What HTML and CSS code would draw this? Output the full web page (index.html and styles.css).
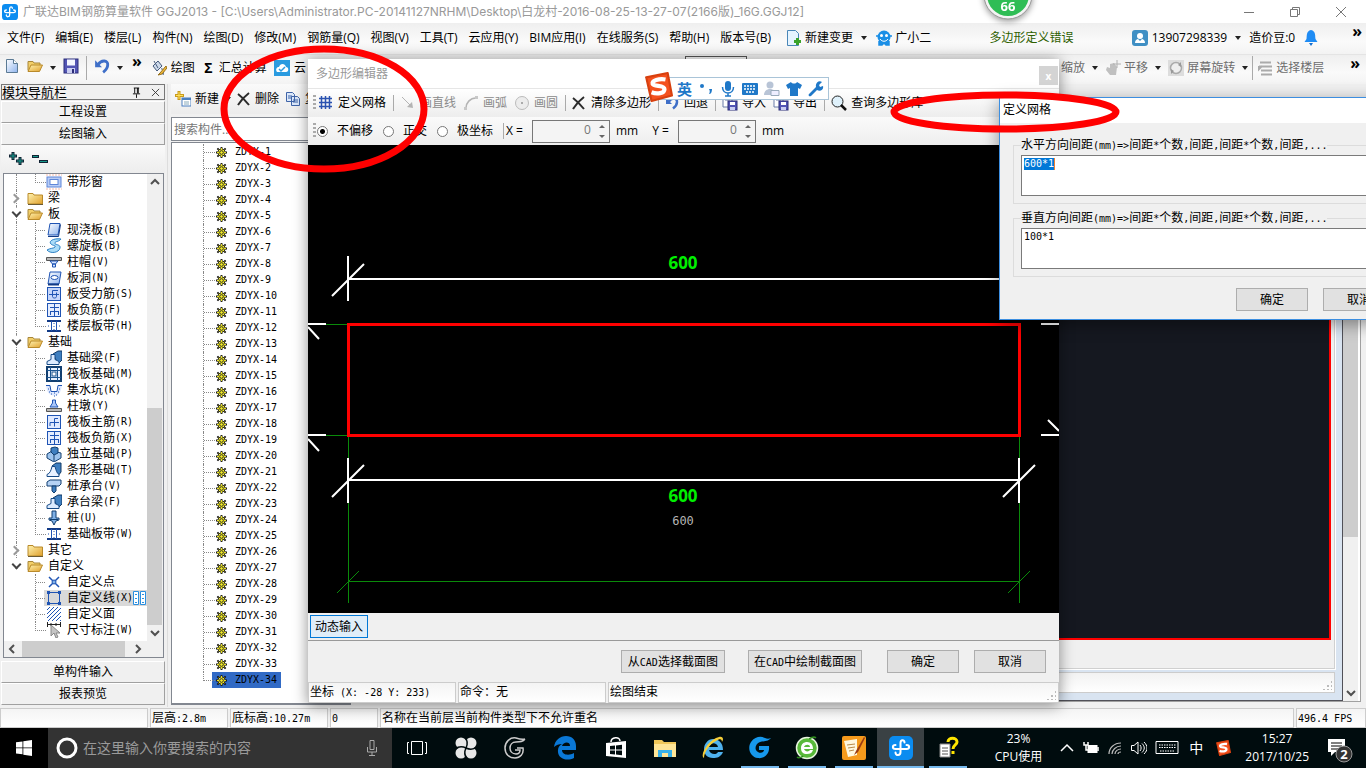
FILE: index.html
```html
<!DOCTYPE html>
<html lang="zh-CN">
<head>
<meta charset="utf-8">
<title>广联达BIM钢筋算量软件 GGJ2013</title>
<link rel="stylesheet" href="styles.css">
</head>
<body>
<svg class="defs" aria-hidden="true">
  <defs>
    <linearGradient id="gold" x1="0" y1="0" x2="1" y2="1"><stop offset="0" stop-color="#fff3b0"/><stop offset="1" stop-color="#e0a02c"/></linearGradient>
    <linearGradient id="sky" x1="0" y1="0" x2="1" y2="1"><stop offset="0" stop-color="#fff"/><stop offset="1" stop-color="#8fb4ee"/></linearGradient>
  </defs>
  <symbol id="app" viewBox="0 0 24 24"><rect width="24" height="24" rx="5" fill="#0b8cf0"/><path d="M15.500 6.500c0-3-4-3-4 .5v9c0 4-5 4-5 .5M6.500 9C3 9 3 13 6.500 13h11c3.500 0 3.500-4 0-4" fill="none" stroke="#fff" stroke-width="2" stroke-linecap="round"/></symbol>
  <symbol id="folder" viewBox="0 0 16 16"><path d="M1 3.500h5l1 1.500h8.500v9H1z" fill="url(#gold)" stroke="#b98a2a"/><path d="M1 14.500h15" stroke="#6b5a33"/></symbol>
  <symbol id="folder-o" viewBox="0 0 16 16"><path d="M1 12.500V3.500h5l1 1.500h6v2" fill="#f2cf6a" stroke="#a8873a"/><path d="M4 7h11.500l-3 6.500H1z" fill="url(#gold)" stroke="#b98a2a"/></symbol>
  <symbol id="i-win" viewBox="0 0 16 16"><path d="M0 1h16M0 15h16" stroke="#f6b8a8" stroke-dasharray="2 1"/><rect x="1" y="3" width="14" height="10" fill="#b9cdf6" stroke="#5f86d8"/><rect x="4" y="5.500" width="8" height="5" fill="#fff" stroke="#5f86d8"/></symbol>
  <symbol id="i-slab" viewBox="0 0 16 16"><path d="M4 1.500h10L12 13H2z" fill="url(#sky)" stroke="#1f54b4"/><path d="M2 14.500h10.500l2-12" fill="none" stroke="#123a86"/></symbol>
  <symbol id="i-spiral" viewBox="0 0 16 16"><path d="M15 1C8 0 2 3 5 6c2 2 5 1 4 3-1 1.500-5 1-8 3 3 4 12 3 13-2 1-4-6-3-5-5 0-2 4-1 6-4z" fill="#a9dcf8" stroke="#2b7fc4"/></symbol>
  <symbol id="i-cap" viewBox="0 0 16 16"><path d="M.5 3.500h15v3H.500z" fill="#b8b8b8" stroke="#555"/><path d="M4 7h8l-2.500 3h-3zM6.500 10h3v3h-3z" fill="#d6e4ff" stroke="#1f54b4"/></symbol>
  <symbol id="i-hole" viewBox="0 0 16 16"><path d="M4 2h11l-2 12H2z" fill="url(#sky)" stroke="#1f54b4"/><ellipse cx="8.500" cy="7.500" rx="3.500" ry="2" fill="#fff" stroke="#1f54b4"/><path d="M2 14.500h11" stroke="#123a86" stroke-width="2"/></symbol>
  <symbol id="i-rebar" viewBox="0 0 16 16"><rect x="1.500" y="1.500" width="13" height="13" fill="#dfe9ff" stroke="#1f54b4"/><path d="M12 4.500H8.500v8M4 12V8.500h9" fill="none" stroke="#1f54b4"/></symbol>
  <symbol id="i-force" viewBox="0 0 16 16"><rect x="1.500" y="1.500" width="13" height="13" fill="#c5d6fb" stroke="#1f54b4"/><path d="M12 4.500H6.500v6c0 2 4 2 4 0v-4M3 8.500h10" fill="none" stroke="#1f54b4"/></symbol>
  <symbol id="i-neg" viewBox="0 0 16 16"><rect x="1.500" y="1.500" width="13" height="13" fill="#e6eeff" stroke="#1f54b4"/><path d="M8.500 2v12M4 5.500h9M4 9.500h9M4.500 9v4M12.500 9v4" fill="none" stroke="#1f54b4"/></symbol>
  <symbol id="i-band" viewBox="0 0 16 16"><path d="M1 3h14M1 13h14" stroke="#123a86" stroke-width="2"/><path d="M5.500 3v10M10.500 3v10" stroke="#1f54b4"/><path d="M2 8h1M8 5v1M8 8v1M8 11v1M13 8h1" stroke="#1f54b4"/></symbol>
  <symbol id="i-beam" viewBox="0 0 16 16"><path d="M7 4l5-3h4v9l-4 4z" fill="#3f7fc0" stroke="#123a66"/><path d="M1 14.500v-3l4-2V4.500h4v5l4 2v3z" fill="#dcebff" stroke="#164a86"/></symbol>
  <symbol id="i-raft" viewBox="0 0 16 16"><rect x="1" y="1" width="14" height="14" fill="#e8f1ff" stroke="#123f70" stroke-width="2"/><path d="M4.500 1v14M11.500 1v14M1 4.500h14M1 11.500h14" stroke="#1c5690"/><rect x="6" y="6" width="4" height="4" fill="#fff" stroke="#1c5690"/></symbol>
  <symbol id="i-pit" viewBox="0 0 16 16"><path d="M0 3.500h4l1 6h6l1-6h4c-1 5-2 10-8 10S1 9 0 3.500z" fill="#dfe9ff"/><path d="M0 3.500h4l1 6h6l1-6h4" fill="none" stroke="#1f54b4"/><path d="M2 7h1M3 10h1M5 12h1M8 11h1M10 13h1M12 10h1M13 7h1M8 14h1" stroke="#1f54b4"/></symbol>
  <symbol id="i-pier" viewBox="0 0 16 16"><path d="M6.500 2h3v3l2.500 4H4l2.500-4z" fill="#a9c6fa" stroke="#1f54b4"/><path d="M.5 10.500h15v3H.500z" fill="#bbb" stroke="#555"/></symbol>
  <symbol id="i-foot" viewBox="0 0 16 16"><path d="M1 8l5-3 9 2v5l-7 4-7-4z" fill="#9fc5ee" stroke="#123f70"/><path d="M5 6V2l4-1 3 1v5l-4 2z" fill="#3f7fc0" stroke="#123f70"/><path d="M8 9v6" stroke="#123f70"/></symbol>
  <symbol id="i-strip" viewBox="0 0 16 16"><path d="M6 4l4-3h5v9l-3 4z" fill="#3f7fc0" stroke="#123a66"/><path d="M1 14.500v-2c3-1 4-4 5-8h3c1 4 2 7 4 8v2z" fill="#e8f1ff" stroke="#164a86"/></symbol>
  <symbol id="i-pcap" viewBox="0 0 16 16"><path d="M1 4l3-2h11v4l-2 2H1z" fill="#b5d2f4" stroke="#123f70"/><path d="M6 8h4v5l-2 2-2-2z" fill="#3f7fc0" stroke="#123f70"/></symbol>
  <symbol id="i-pile" viewBox="0 0 16 16"><path d="M6 1h4v7h3v2l-3 1-2 4-2-4-3-1V8h3z" fill="#7fb0e6" stroke="#123f70"/><path d="M4 9.500h8" stroke="#123f70"/></symbol>
  <symbol id="i-pt" viewBox="0 0 16 16"><path d="M3 3l10 10M13 3L3 13" stroke="#1f54b4" stroke-width="1.500"/><circle cx="8" cy="8" r="2" fill="#7fb0e6" stroke="#1f54b4"/></symbol>
  <symbol id="i-line" viewBox="0 0 16 16"><path d="M2.500 2.500h11v11h-11z" fill="none" stroke="#1f54b4"/><path d="M1 1h3v3H1zM12 1h3v3h-3zM1 12h3v3H1zM12 12h3v3h-3z" fill="#1f54b4"/></symbol>
  <symbol id="i-face" viewBox="0 0 16 16"><path d="M1 4l3-3M1 8l7-7M1 12l11-11M2 15L15 2M6 15l9-9M10 15l5-5M14 15l1-1" stroke="#1f54b4"/></symbol>
  <symbol id="i-dim" viewBox="0 0 16 16"><path d="M1 2.500h14M1.500 0v5M14.500 0v5M5 1v3M10 1v3" stroke="#222"/><path d="M5 3v11l3-3 2 5 2-1-2-4h4z" fill="#c4c4c4" stroke="#888"/></symbol>
  <symbol id="gear" viewBox="0 0 12 12"><path d="M6 0v12M0 6h12M1.500 1.500l9 9M10.500 1.500l-9 9" stroke="#111" stroke-width="2"/><circle cx="6" cy="6" r="4" fill="#f4ec28" stroke="#222"/><path d="M6 1v10M1 6h10M3 3l6 6M9 3L3 9" stroke="#f4ec28"/><circle cx="6" cy="6" r="2" fill="#f4ec28" stroke="#222"/></symbol>
  <symbol id="x" viewBox="0 0 14 14"><path d="M1 2c4 3 7 6 11 11M12 1C8 4 4 8 1 13" fill="none" stroke="#2b2b2b" stroke-width="2"/></symbol>
  <symbol id="undo" viewBox="0 0 14 14"><path d="M1 2v6h6z" fill="#3f6fc8"/><path d="M3.500 6c3-5 9-4 8.500 0 0 3-2 5-4 6.500" fill="none" stroke="#3f6fc8" stroke-width="2.500"/></symbol>
  <symbol id="disk" viewBox="0 0 16 16"><rect x="1" y="1" width="14" height="14" fill="#5254b4" stroke="#2b2c78"/><rect x="4" y="1.500" width="8" height="6" fill="#f4f6ff"/><rect x="4" y="10" width="8" height="5" fill="#c9cdf2"/><rect x="9" y="11" width="2" height="4" fill="#2b2c78"/></symbol>
  <symbol id="io" viewBox="0 0 16 16"><path d="M1 3h9v9H1zM3 5h5" fill="#fff" stroke="#6b7ca8"/><rect x="6" y="6" width="9" height="9" fill="#5254b4" stroke="#2b2c78"/><rect x="8" y="7" width="5" height="3" fill="#fff"/><rect x="8" y="12" width="5" height="3" fill="#c9cdf2"/></symbol>
  <symbol id="doc" viewBox="0 0 16 16"><path d="M2.500 1.500h7l4 4v9h-11z" fill="url(#sky)" stroke="#5b7a94"/><path d="M9.500 1.500v4h4" fill="#fff" stroke="#5b7a94"/></symbol>
  <symbol id="sogou" viewBox="0 0 28 28"><path d="M3 5l20-4 4 21-19 5z" fill="#f4511e" stroke="#d8400f" stroke-linejoin="round" stroke-width="2"/><path d="M21 7c-6-1-13 1-12 4s11 1 11 5-7 5-12 3" fill="none" stroke="#fff" stroke-width="4"/></symbol>
</svg>

<div class="desktop">
<header class="titlebar">
  <svg class="i16"><use href="#app"/></svg>
  <h1>广联达BIM钢筋算量软件 GGJ2013 - [C:\Users\Administrator.PC-20141127NRHM\Desktop\白龙村-2016-08-25-13-27-07(2166版)_16G.GGJ12]</h1>
  <div class="winctl">
    <button aria-label="最小化"><svg viewBox="0 0 12 12"><path d="M1 6.500h10"/></svg></button>
    <button aria-label="还原"><svg viewBox="0 0 12 12"><path d="M1.500 3.500h7v7h-7zM3.500 3.500v-2h7v7h-2"/></svg></button>
    <button aria-label="关闭"><svg viewBox="0 0 12 12"><path d="M1 1l10 10M11 1L1 11"/></svg></button>
  </div>
</header>

<nav class="menubar">
  <button>文件(F)</button><button>编辑(E)</button><button>楼层(L)</button><button>构件(N)</button><button>绘图(D)</button><button>修改(M)</button><button>钢筋量(Q)</button><button>视图(V)</button><button>工具(T)</button><button>云应用(Y)</button><button>BIM应用(I)</button><button>在线服务(S)</button><button>帮助(H)</button><button>版本号(B)</button>
  <button class="ic"><svg class="i16" viewBox="0 0 16 16"><path d="M1.500.500h8l3 3v12h-11z" fill="#e6f4ff" stroke="#4a87b8"/><path d="M9.500 8v7M6 11.500h7" transform="translate(2)" stroke="#3aa32b" stroke-width="3"/></svg>新建变更</button><span class="caret"></span>
  <button class="ic"><svg class="i16" viewBox="0 0 16 16"><circle cx="8" cy="7" r="6.500" fill="#1b8fe6"/><path d="M3 11v4h3l2-2 2 2h3v-4M0 6h2M14 6h2" fill="#1b8fe6" stroke="#1b8fe6" stroke-width="1.500"/><circle cx="5.500" cy="5.500" r="1.500" fill="#fff"/><circle cx="10.500" cy="5.500" r="1.500" fill="#fff"/><path d="M4 9c2 3 6 3 8 0" fill="none" stroke="#fff"/></svg>广小二</button>
  <p class="notice">多边形定义错误</p>
  <div class="account">
    <button class="ic"><svg class="i16" viewBox="0 0 16 16"><rect width="16" height="16" rx="3" fill="#3f8fc4"/><circle cx="8" cy="6" r="3" fill="#fff"/><path d="M3 13c0-3 2-4 3-4l2 2 2-2c1 0 3 1 3 4z" fill="#fff"/></svg>13907298339</button>
    <span class="caret"></span><span>造价豆:0</span>
    <svg class="i16" viewBox="0 0 16 16"><path d="M8 0c5 1 4 6 4.500 9l2 3h-13l2-3C4 6 3 1 8 0z" fill="#1f8cf4"/><path d="M6 13h4l-2 3z" fill="#156fd0"/></svg>
  </div>
  <span class="more">»</span>
</nav>

<div class="toolbar">
  <button aria-label="新建"><svg class="i16"><use href="#doc"/></svg></button>
  <button aria-label="打开"><svg class="i16"><use href="#folder-o"/></svg></button><span class="caret"></span>
  <button aria-label="保存"><svg class="i16"><use href="#disk"/></svg></button><i class="sep"></i>
  <button aria-label="撤销"><svg class="i16"><use href="#undo"/></svg></button><span class="caret"></span><span class="more">»</span>
  <button class="ic"><svg class="i16" viewBox="0 0 16 16"><path d="M2 6l5-5 4 5-5 5z" fill="#cdd9ea" stroke="#44597a"/><path d="M3 1l4 7M10 9c3-1 3 3 2 6" stroke="#44597a" fill="none"/><path d="M15 6l-6 7-2 2 4-1 5-6z" fill="#f0b93a" stroke="#97701c"/></svg>绘图</button>
  <button class="ic"><b>Σ</b>汇总计算</button>
  <button class="ic"><svg class="i16" viewBox="0 0 16 16"><rect width="16" height="16" fill="#2a9be0"/><path d="M3 12c-2-3 0-5 2-5 1-4 6-4 7 0 3 0 3 5 0 5z" fill="#fff"/><path d="M5 9l2 2 4-4" stroke="#2a9be0" fill="none" stroke-width="1.500"/></svg>云</button>
  <select aria-label="楼层"></select>
  <div class="toolbar-right">
    <span>缩放</span><span class="caret"></span>
    <button class="ic"><svg class="i16" viewBox="0 0 16 16"><path d="M2 7l3 1V4l4-1 3 4-1 8H5L1 10z" fill="#c0c0c0"/><path d="M12 0v8M8 4h8" stroke="#b0b0b0"/></svg>平移</button><span class="caret"></span>
    <button class="ic"><svg class="i16" viewBox="0 0 16 16"><rect width="16" height="16" fill="#ddd"/><circle cx="8" cy="8" r="5.500" fill="#eee" stroke="#aaa" stroke-width="1.500"/><path d="M10 5l3-3v5zM6 11l-3 3V9z" fill="#999"/></svg>屏幕旋转</button><span class="caret"></span><i class="sep"></i>
    <button class="ic"><svg class="i16" viewBox="0 0 16 16"><path d="M3 2.500h11M2 6.500h13M4 10.500h11M4 14.500h11M2 6v3l3-3" stroke="#aaa" stroke-width="2" fill="none"/></svg>选择楼层</button>
  </div>
  <span class="more">»</span>
</div>

<main class="main">
  <aside class="nav-panel">
    <h2 class="nav-head"><span>模块导航栏</span><svg class="pin" viewBox="0 0 10 12"><path d="M2 1h6M3 1v6M7 1v6M6 1v6M1 7.500h8M5 8v4" stroke="#000" fill="none"/></svg><svg class="pin" viewBox="0 0 10 12"><path d="M1 2l8 8M9 2l-8 8" stroke="#333"/></svg></h2>
    <button class="bar">工程设置</button>
    <button class="bar">绘图输入</button>
    <div class="nav-tools">
      <svg viewBox="0 0 42 16"><path d="M6 1v8M2 5h8M13 6v8M9 10h8" stroke="#123" stroke-width="3"/><path d="M6 2v6M3 5h6M13 7v6M10 10h6" stroke="#169a8c"/><path d="M25 5.500h7M32 10.500h9" stroke="#123" stroke-width="3"/><path d="M26 5.500h5M33 10.500h7" stroke="#169a8c"/></svg>
    </div>
    <div class="tree-box">
      <div class="tree-row">
        <ul class="tree">
          <li class="leaf end"><svg><use href="#i-win"/></svg>带形窗</li>
          <li class="node shut"><i></i><svg><use href="#folder"/></svg>梁</li>
          <li class="node"><i></i><svg><use href="#folder-o"/></svg>板</li>
          <li class="leaf"><svg><use href="#i-slab"/></svg>现浇板<span class="m">(B)</span></li>
          <li class="leaf"><svg><use href="#i-spiral"/></svg>螺旋板<span class="m">(B)</span></li>
          <li class="leaf"><svg><use href="#i-cap"/></svg>柱帽<span class="m">(V)</span></li>
          <li class="leaf"><svg><use href="#i-hole"/></svg>板洞<span class="m">(N)</span></li>
          <li class="leaf"><svg><use href="#i-force"/></svg>板受力筋<span class="m">(S)</span></li>
          <li class="leaf"><svg><use href="#i-neg"/></svg>板负筋<span class="m">(F)</span></li>
          <li class="leaf end"><svg><use href="#i-band"/></svg>楼层板带<span class="m">(H)</span></li>
          <li class="node"><i></i><svg><use href="#folder-o"/></svg>基础</li>
          <li class="leaf"><svg><use href="#i-beam"/></svg>基础梁<span class="m">(F)</span></li>
          <li class="leaf"><svg><use href="#i-raft"/></svg>筏板基础<span class="m">(M)</span></li>
          <li class="leaf"><svg><use href="#i-pit"/></svg>集水坑<span class="m">(K)</span></li>
          <li class="leaf"><svg><use href="#i-pier"/></svg>柱墩<span class="m">(Y)</span></li>
          <li class="leaf"><svg><use href="#i-rebar"/></svg>筏板主筋<span class="m">(R)</span></li>
          <li class="leaf"><svg><use href="#i-neg"/></svg>筏板负筋<span class="m">(X)</span></li>
          <li class="leaf"><svg><use href="#i-foot"/></svg>独立基础<span class="m">(P)</span></li>
          <li class="leaf"><svg><use href="#i-strip"/></svg>条形基础<span class="m">(T)</span></li>
          <li class="leaf"><svg><use href="#i-pcap"/></svg>桩承台<span class="m">(V)</span></li>
          <li class="leaf"><svg><use href="#i-beam"/></svg>承台梁<span class="m">(F)</span></li>
          <li class="leaf"><svg><use href="#i-pile"/></svg>桩<span class="m">(U)</span></li>
          <li class="leaf end"><svg><use href="#i-band"/></svg>基础板带<span class="m">(W)</span></li>
          <li class="node shut"><i></i><svg><use href="#folder"/></svg>其它</li>
          <li class="node last"><i></i><svg><use href="#folder-o"/></svg>自定义</li>
          <li class="leaf tail"><svg><use href="#i-pt"/></svg>自定义点</li>
          <li class="leaf tail current"><svg><use href="#i-line"/></svg>自定义线<span class="m">(X)</span><svg class="cols" viewBox="0 0 13 16"><path d="M.5 1.500h5v13h-5zM7.500 1.500h5v13h-5z" fill="#fff" stroke="#2a8fe0"/><path d="M2 4.500h2M2 8.500h2M2 12.500h2M9 4.500h2M9 8.500h2M9 12.500h2" stroke="#2a8fe0"/></svg></li>
          <li class="leaf tail"><svg><use href="#i-face"/></svg>自定义面</li>
          <li class="leaf tail end"><svg><use href="#i-dim"/></svg>尺寸标注<span class="m">(W)</span></li>
        </ul>
        <div class="vscroll"><svg viewBox="0 0 16 16"><path d="M4 10l4-4 4 4"/></svg><div class="track"><i class="thumb nav-thumb"></i></div><svg viewBox="0 0 16 16"><path d="M4 6l4 4 4-4"/></svg></div>
      </div>
      <div class="hscroll"><svg viewBox="0 0 16 16"><path d="M10 4L6 8l4 4"/></svg><i class="thumb"></i><svg viewBox="0 0 16 16"><path d="M6 4l4 4-4 4"/></svg></div>
    </div>
    <button class="bar">单构件输入</button>
    <button class="bar">报表预览</button>
  </aside>

  <section class="parts">
    <div class="parts-tools">
      <button class="ic"><svg class="i16" viewBox="0 0 16 16"><path d="M4 0v9M0 4.500h9" stroke="#c99a1c" stroke-width="3"/><path d="M4 1v7M1 4.500h7" stroke="#ffe25a"/><rect x="7" y="7" width="9" height="8" fill="#fff" stroke="#4a7fc0"/><path d="M7 8h9" stroke="#4a7fc0" stroke-width="2"/><path d="M9 11h5M9 13h5" stroke="#8ab"/></svg>新建</button><span class="caret"></span>
      <button class="ic"><svg class="i14"><use href="#x"/></svg>删除</button>
      <button class="ic"><svg class="i16" viewBox="0 0 16 16"><path d="M1.500 1.500h6l2 2v7h-8zM6.500 5.500h6l2 2v7h-8z" fill="#dbe8fb" stroke="#3f64a8"/><path d="M3 5h4M3 7h3M8 9h5M8 11h5" stroke="#3f64a8"/></svg>复制</button>
    </div>
    <input class="search" type="text" placeholder="搜索构件..." aria-label="搜索构件">
    <ul class="list">
      <li><svg><use href="#gear"/></svg>ZDYX-1</li><li><svg><use href="#gear"/></svg>ZDYX-2</li><li><svg><use href="#gear"/></svg>ZDYX-3</li><li><svg><use href="#gear"/></svg>ZDYX-4</li><li><svg><use href="#gear"/></svg>ZDYX-5</li><li><svg><use href="#gear"/></svg>ZDYX-6</li><li><svg><use href="#gear"/></svg>ZDYX-7</li><li><svg><use href="#gear"/></svg>ZDYX-8</li><li><svg><use href="#gear"/></svg>ZDYX-9</li><li><svg><use href="#gear"/></svg>ZDYX-10</li><li><svg><use href="#gear"/></svg>ZDYX-11</li><li><svg><use href="#gear"/></svg>ZDYX-12</li><li><svg><use href="#gear"/></svg>ZDYX-13</li><li><svg><use href="#gear"/></svg>ZDYX-14</li><li><svg><use href="#gear"/></svg>ZDYX-15</li><li><svg><use href="#gear"/></svg>ZDYX-16</li><li><svg><use href="#gear"/></svg>ZDYX-17</li><li><svg><use href="#gear"/></svg>ZDYX-18</li><li><svg><use href="#gear"/></svg>ZDYX-19</li><li><svg><use href="#gear"/></svg>ZDYX-20</li><li><svg><use href="#gear"/></svg>ZDYX-21</li><li><svg><use href="#gear"/></svg>ZDYX-22</li><li><svg><use href="#gear"/></svg>ZDYX-23</li><li><svg><use href="#gear"/></svg>ZDYX-24</li><li><svg><use href="#gear"/></svg>ZDYX-25</li><li><svg><use href="#gear"/></svg>ZDYX-26</li><li><svg><use href="#gear"/></svg>ZDYX-27</li><li><svg><use href="#gear"/></svg>ZDYX-28</li><li><svg><use href="#gear"/></svg>ZDYX-29</li><li><svg><use href="#gear"/></svg>ZDYX-30</li><li><svg><use href="#gear"/></svg>ZDYX-31</li><li><svg><use href="#gear"/></svg>ZDYX-32</li><li><svg><use href="#gear"/></svg>ZDYX-33</li><li class="end"><span class="sel"><svg><use href="#gear"/></svg>ZDYX-34</span></li>
    </ul>
  </section>

  <section class="work">
    <div class="work-doc">
      <div class="mdi">
        <div class="view"><div class="view-canvas"></div></div>
        <div class="mdi-status"><i class="grip"></i></div>
      </div>
      <div class="vscroll"><svg viewBox="0 0 16 16"><path d="M4 10l4-4 4 4"/></svg><div class="track"><i class="thumb view-thumb"></i></div><svg viewBox="0 0 16 16"><path d="M4 6l4 4 4-4"/></svg></div>
    </div>
  </section>
</main>

<footer class="status">
  <span class="s-a"></span><span class="s-b">层高<span class="m">:2.8m</span></span><span class="s-c">底标高<span class="m">:10.27m</span></span><span class="s-d"><span class="m">0</span></span><span class="s-e">名称在当前层当前构件类型下不允许重名</span><span class="s-f"><span class="m">496.4 FPS</span></span>
</footer>

<div class="taskbar">
  <button class="start" aria-label="开始"><svg viewBox="0 0 16 16"><path d="M0 2.300L6.500 1.400v6H0zM7.300 1.300L16 0v7.400H7.300zM0 8.300h6.500v6L0 13.500zM7.300 8.300H16V16l-8.700-1.300z" fill="#fff"/></svg></button>
  <label class="cortana"><svg class="ring" viewBox="0 0 22 22"><circle cx="11" cy="11" r="9" fill="none" stroke="#fff" stroke-width="3"/></svg><input type="text" placeholder="在这里输入你要搜索的内容" aria-label="搜索"><svg class="mic" viewBox="0 0 12 18"><path d="M4 1.500h4v9H4zM1.500 8v5h9V8M6 13v4M3 16.500h6" fill="none" stroke="#aaa"/></svg></label>
  <div class="apps">
    <button aria-label="任务视图"><svg viewBox="0 0 24 24"><path d="M6.500 5.500h11v13h-11zM4 6.500H2.500v11H4M20 6.500h1.500v11H20" fill="none" stroke="#fff"/></svg></button>
    <button aria-label="风扇"><svg viewBox="0 0 24 24"><g fill="#e8e8e8"><circle cx="7" cy="7" r="5.500"/><circle cx="17" cy="7" r="5.500"/><circle cx="17" cy="17" r="5.500"/><circle cx="7" cy="17" r="5.500"/><circle cx="12" cy="12" r="5"/></g><path d="M11 1c3 4 3 7 1 11M23 11c-4 3-7 3-11 1M13 23c-3-4-3-7-1-11M1 13c4-3 7-3 11-1" stroke="#000c0e" fill="none" stroke-width="1.500"/></svg></button>
    <button aria-label="旋风"><svg viewBox="0 0 24 24"><path d="M22 3c-3 1-6 0-9-1C7 1 2 6 2 12s4 10 10 10c5 0 9-4 8-10h-6M22 3c-2 3-5 3-9 3-4 0-6 3-6 6s2 6 6 6c3 0 4-2 4-4h-5" fill="none" stroke="#ccc" stroke-width="1.500"/></svg></button>
    <button class="wide" aria-label="Edge"><svg viewBox="0 0 24 24"><path d="M1 11C2 4 7 0 13 0c6 0 10 4 10 10v4H9c0 5 7 6 12 3v5C13 26 4 22 5 14c0-3 2-5 4-6-3 0-6 1-8 3zm8-1h8c0-5-7-4-8 0z" fill="#0a78d6"/></svg></button>
    <button aria-label="商店"><svg viewBox="0 0 24 24"><path d="M2 7l20-2v17l-20-2z" fill="#fff"/><path d="M7 6c0-5 9-6 9-1" fill="none" stroke="#fff" stroke-width="1.500"/><path d="M6 10l5-.5v4H6zM12 9.400l6-.6v4.700h-6zM6 14.500h5v4L6 18zM12 14.500h6v4.800l-6-.7z" fill="#000c0e"/></svg></button>
    <button aria-label="资源管理器"><svg viewBox="0 0 24 24"><path d="M1 4h8l2 2h12v15H1z" fill="#f0c75a"/><path d="M1 8h22v13H1z" fill="#ffe596"/><path d="M5 21v-7h14v7h-4v-4H9v4z" fill="#38b0e8"/></svg></button>
    <button aria-label="IE"><svg viewBox="0 0 24 24"><path d="M12 3c6 0 10 4 10 11H8c1 5 8 5 9 2h5c-2 5-6 6-10 6C6 22 3 18 3 13S7 3 12 3zM8 11h9c-1-5-8-5-9 0z" fill="#4fb2ee"/><path d="M3 22C-2 19 8 3 18 1c4-1 5 2 3 5 0-3-2-4-6-1C9 8 3 16 3 22z" fill="#f6cf3a"/></svg></button>
    <button class="run" aria-label="广联达G"><svg viewBox="0 0 24 24"><path d="M23 2c-3 4-8 3-11 4-5 2-6 8-2 10 3 2 6 0 6-2h-5v-4h10c1 8-5 13-11 12C2 21-1 12 3 6 7 0 14 0 17 2c2 1 4 1 6 0z" fill="#1698ec"/></svg></button>
    <button class="run" aria-label="浏览器"><svg viewBox="0 0 24 24"><circle cx="12" cy="12" r="10.500" fill="#58b93a" stroke="#e8f6e0" stroke-width="1.500"/><path d="M12 6c4 0 6 3 6 7H9c1 3 5 3 6 1h3c-1 3-3 4-6 4-4 0-6-2-6-6s3-6 6-6zM9 11h6c0-3-5-3-6 0z" fill="#fff"/><path d="M2 21c1 1 4 1 6-1M14 3c3-2 6-2 7-1" fill="none" stroke="#2d8a1c" stroke-width="1.500"/></svg></button>
    <button class="run" aria-label="记事"><svg viewBox="0 0 24 24"><rect width="24" height="24" rx="2" fill="#f59a1c"/><path d="M2 5l13-2v16L6 21z" fill="#fff8e0"/><path d="M5 9l8-1M6 12l7-1M7 15l5-1" stroke="#b98a4a"/><path d="M22 1l-8 14-2 4 4-3 7-14z" fill="#9a3b12"/></svg></button>
    <button class="run active" aria-label="广联达"><svg><use href="#app"/></svg></button>
    <button class="run" aria-label="帮助"><svg viewBox="0 0 24 24"><path d="M4 8h10v13H4z" fill="#fff" stroke="#888"/><path d="M6 12h6M6 15h6M6 18h6" stroke="#555"/><path d="M12 6c0-5 9-5 9 0 0 3-4 3-4 7M17 15v3" fill="none" stroke="#ffe600" stroke-width="3"/></svg></button>
  </div>
  <div class="tray">
    <div class="cpu">23%<br>CPU使用</div>
    <svg viewBox="0 0 16 16"><path d="M2 11l6-6 6 6" fill="none" stroke="#fff" stroke-width="1.500"/></svg>
    <svg viewBox="0 0 16 16"><rect x="5" y="5.500" width="9" height="7" fill="#fff" stroke="#fff"/><path d="M15 7v4M1 2v3h4V2M3 5v5h2" fill="none" stroke="#fff" stroke-width="1.500"/></svg>
    <svg viewBox="0 0 16 16"><path d="M2 14C2 8 7 3 14 3M5 14c0-4 4-8 9-8M8 14c0-3 3-5 6-5M11 14c0-1 1-2 3-2" fill="none" stroke="#bbb" stroke-width="1.200"/></svg>
    <svg viewBox="0 0 16 16"><path d="M.5 5.500H3l4-3.500v12L3 10.500H.500zM9 5c1.500 2 1.500 4 0 6M11 3.500c3 3 3 6 0 9M13 2c4 4 4 8 0 12" fill="none" stroke="#fff"/></svg>
    <svg class="kbd" viewBox="0 0 24 16"><path d="M1 1.500h22v12H1z" fill="none" stroke="#fff"/><path d="M4 5h17M4 7.500h17M5 11h14" stroke="#fff" stroke-dasharray="1.500 1"/></svg>
    <span class="lang">中</span>
    <svg viewBox="0 0 28 28"><use href="#sogou"/></svg>
    <div class="clock">15:27<br>2017/10/25</div>
    <svg class="note" viewBox="0 0 26 26"><path d="M1 1h17v13H8l-4 4v-4H1z" fill="#fff"/><path d="M4 5h11M4 8h11M4 11h8" stroke="#000"/><circle cx="17" cy="16" r="8" fill="#333" stroke="#999"/><text x="17" y="21" text-anchor="middle" class="badge">2</text></svg>
  </div>
</div>

<section class="editor" aria-label="多边形编辑器">
  <header><span>多边形编辑器</span><button aria-label="关闭">x</button></header>
  <div class="ed-tools">
    <i class="dots"></i>
    <button class="ic"><svg class="i16" viewBox="0 0 16 16"><path d="M3.500 1v13M7.500 1v13M11.500 1v13M1 3.500h13M1 7.500h13M1 11.500h13" stroke="#2a52b0" stroke-width="1.500"/></svg>定义网格</button><i class="sep"></i>
    <button class="ic off"><svg class="i16" viewBox="0 0 16 16"><path d="M2 2l9 9" stroke="#b4b4b4"/><path d="M13 13l-1-6-5 5z" fill="#b4b4b4"/></svg>画直线</button>
    <button class="ic off"><svg class="i16" viewBox="0 0 16 16"><path d="M3 13C3 8 7 3 13 3" fill="none" stroke="#b4b4b4" stroke-width="1.500"/><path d="M1 12h3v3H1zM12 1h3v3h-3z" fill="#c8c8c8"/></svg>画弧</button>
    <button class="ic off"><svg class="i16" viewBox="0 0 16 16"><circle cx="8" cy="8" r="6.500" fill="#ececec" stroke="#bbb"/><path d="M7 7h2v2H7z" fill="#aaa"/></svg>画圆</button><i class="sep"></i>
    <button class="ic"><svg class="i14"><use href="#x"/></svg>清除多边形</button><i class="sep"></i>
    <button class="ic"><svg class="i14"><use href="#undo"/></svg>回退</button><i class="sep"></i>
    <button class="ic"><svg class="i16"><use href="#io"/></svg>导入</button>
    <button class="ic"><svg class="i16"><use href="#io"/></svg>导出</button><i class="sep"></i>
    <button class="ic"><svg class="i16" viewBox="0 0 16 16"><circle cx="6.500" cy="6.500" r="5.500" fill="#dff1fb" stroke="#222"/><path d="M10 10l5 5" stroke="#111" stroke-width="2.500"/></svg>查询多边形库</button>
  </div>
  <div class="ed-opts">
    <i class="dots"></i>
    <label><input type="radio" name="off" checked>不偏移</label>
    <label><input type="radio" name="off">正交</label>
    <label><input type="radio" name="off">极坐标</label><i class="sep"></i>
    <label class="num">X =<span class="spin"><input type="text" value="0"><span class="ud"><i></i><i></i></span></span>mm</label>
    <label class="num">Y =<span class="spin"><input type="text" value="0"><span class="ud"><i></i><i></i></span></span>mm</label>
  </div>
  <div class="cad">
    <svg viewBox="308 145 751 468" preserveAspectRatio="xMinYMin meet">
      <g fill="none" stroke="#0a8a0a"><path d="M326 324.500h22M326 435.500h22M348.500 437v166M1019.500 437v166M348 581.500h671M337 593l22-22M1008 593l22-22"/></g>
      <g fill="none" stroke="#fff" stroke-width="2"><path d="M348 256v45M332 296l32-32M348 279h671M1019 256v45M308 324h18M308 327l11 12M308 435h18M308 439l11 12M348 458v45M332 497l32-32M348 480h671M1019 458v45M1003 497l32-32M1041 324h18M1041 435h18M1048 420l11 11"/></g>
      <path d="M348.500 324.500h671v111h-671z" fill="none" stroke="red" stroke-width="3"/>
      <text x="683" y="269" class="dim">600</text>
      <text x="683" y="502" class="dim">600</text>
      <text x="683" y="525" class="sub">600</text>
    </svg>
  </div>
  <div class="ed-dyn"><button>动态输入</button></div>
  <div class="ed-actions"><button class="btn">从<span class="m">CAD</span>选择截面图</button><button class="btn mid">在<span class="m">CAD</span>中绘制截面图</button><button class="btn ok">确定</button><button class="btn ok">取消</button></div>
  <div class="ed-status"><span>坐标<span class="m"> (X: -28 Y: 233)</span></span><span>命令：无</span><span>绘图结束<i class="grip"></i></span></div>
</section>

<section class="dialog" aria-label="定义网格">
  <header>定义网格</header>
  <div class="dlg-body">
    <fieldset><legend id="hl">水平方向间距<span class="m">(mm)=></span>间距<span class="m">*</span>个数<span class="m">,</span>间距<span class="m">,</span>间距<span class="m">*</span>个数<span class="m">,</span>间距<span class="m">,...</span></legend><div class="area" role="textbox" aria-labelledby="hl" contenteditable="true" tabindex="0"><mark>600*1</mark></div></fieldset>
    <fieldset><legend><label for="vs">垂直方向间距<span class="m">(mm)=></span>间距<span class="m">*</span>个数<span class="m">,</span>间距<span class="m">,</span>间距<span class="m">*</span>个数<span class="m">,</span>间距<span class="m">,...</span></label></legend><textarea class="area" id="vs">100*1</textarea></fieldset>
    <div class="dlg-actions"><button class="btn ok">确定</button><button class="btn ok">取消</button></div>
  </div>
</section>

<div class="ime">
  <svg class="logo"><use href="#sogou"/></svg>
  <b>英</b>
  <svg viewBox="0 0 16 16"><circle cx="4" cy="5" r="2" fill="#1f78c8"/><path d="M11 8h3c0 3-1 5-3 5 1-2 1-3 0-5z" fill="#1f78c8"/></svg>
  <svg viewBox="0 0 16 16"><rect x="5" y="0" width="6" height="10" rx="3" fill="#1f78c8"/><path d="M2.500 6c0 8 11 8 11 0M8 12v3M5 15h6" fill="none" stroke="#1f78c8" stroke-width="1.500"/></svg>
  <svg viewBox="0 0 16 16"><rect y="2" width="16" height="12" rx="1" fill="#1f78c8"/><path d="M2 5h12M2 8h12M4 11h8" stroke="#fff" stroke-dasharray="2 1" stroke-width="1.500"/></svg>
  <svg viewBox="0 0 16 16"><circle cx="6" cy="4" r="3.500" fill="#b8c4d6"/><path d="M0 14c0-8 12-8 12 0z" fill="#b8c4d6"/><path d="M7 9.500h8v5H7z" fill="#eef" stroke="#9ab"/></svg>
  <svg viewBox="0 0 16 16"><path d="M5 1c1 2 5 2 6 0l5 3-2 4-2-1v8H4V7L2 8 0 4z" fill="#1f78c8"/></svg>
  <svg viewBox="0 0 16 16"><path d="M1 13l7-7c-1-4 3-7 6-5l-3 3 1 2 3-1c1 4-3 6-6 4l-6 6c-2 1-3-1-2-2z" fill="#1f78c8"/></svg>
</div>

<svg class="ball" viewBox="0 0 52 52"><circle cx="26" cy="26" r="24" fill="#f4f4f4" stroke="#999"/><circle cx="26" cy="26" r="21" fill="#2fbd55"/><text x="26" y="42" text-anchor="middle">66</text></svg>

<svg class="marks" aria-hidden="true"><ellipse cx="324" cy="109" rx="100" ry="60"/><ellipse cx="1005" cy="112" rx="111" ry="17"/></svg>
</div>
</body>
</html>
```
FILE: styles.css
```css
* { box-sizing: border-box; }
body {
  margin: 0;
  overflow: hidden;
  font: 12px/16px "Open Sans", "Noto Sans CJK SC", sans-serif;
  color: #000;
  background: #f0f0f0;
}
button, input, textarea { font: inherit; color: inherit; margin: 0; }
button { padding: 0; border: 0; background: none; white-space: nowrap; }
h1, h2, p, ul { margin: 0; padding: 0; font-size: 12px; font-weight: 400; }
ul { list-style: none; }
svg { flex: none; }
.defs { position: absolute; width: 0; height: 0; }
.desktop { position: relative; display: flex; flex-direction: column; height: 100vh; overflow: hidden; }
.i16 { width: 16px; height: 16px; }
.i14 { width: 14px; height: 14px; }
.m { font: 10px/16px "DejaVu Sans Mono", monospace; white-space: pre; }
.ic { display: inline-flex; align-items: center; gap: 4px; }
.sep { width: 1px; height: 16px; background: #aaa; flex: none; }
.caret { border: 3px solid transparent; border-top: 4px solid #222; border-bottom: 0; flex: none; }
.more { font-size: 16px; font-weight: 700; line-height: 12px; }

/* main window chrome */
.titlebar { display: flex; align-items: center; gap: 5px; height: 23px; padding-left: 2px; background: #fff; color: #999; }
.titlebar h1 { flex: 1; white-space: nowrap; font-family: Inter, "Noto Sans CJK SC", sans-serif; }
.winctl { display: flex; gap: 34px; padding-right: 19px; }
.winctl button { width: 12px; height: 12px; display: block; }
.winctl svg { display: block; width: 12px; height: 12px; fill: none; stroke: #777; }
.menubar, .toolbar { display: flex; align-items: center; background: linear-gradient(#efefef, #fafafa 60%, #f3f3f3); }
.menubar { height: 31px; gap: 11px; padding: 0 4px 2px 7px; }
.menubar > .ic { margin-left: 4px; gap: 3px; }
.menubar > .caret { margin: 0 -6px 0 -3px; }
.notice { flex: 1; text-align: center; color: #2e6000; }
.account { display: flex; align-items: center; gap: 8px; margin-right: 22px; }
.menubar .more, .toolbar > .more:last-child { align-self: flex-start; padding-top: 2px; }
.toolbar { height: 30px; gap: 7px; padding: 0 4px 4px; border-top: 1px solid #e4e4e4; }
.toolbar .sep { height: 24px; }
.toolbar .more { align-self: flex-start; padding: 0 2px; }
.toolbar b { font-size: 14px; width: 13px; }
.toolbar select { width: 62px; height: 22px; margin-left: 372px; align-self: flex-start; margin-top: 1px; border: 1px solid #555; background: #f4f4f4; }
.toolbar-right { display: flex; align-items: center; gap: 7px; margin-left: auto; margin-right: 17px; color: #6d6d6d; }
.toolbar-right .ic { gap: 3px; }
.toolbar-right .sep { margin: 0 -3px; }
.main { flex: 1; display: flex; min-height: 0; }

/* module navigation */
.nav-panel { width: 168px; display: flex; flex-direction: column; padding: 0 2px 2px 1px; border-right: 1px solid #ddd; }
.nav-head { display: flex; align-items: center; gap: 10px; height: 16px; padding-right: 4px; border: 1px solid #777; margin-bottom: 1px; }
.nav-head span { flex: 1; font-size: 13px; line-height: 13px; }
.pin { width: 9px; height: 11px; }
.bar { height: 22px; border: 1px solid #a0a0a0; border-color: #fff #a0a0a0 #a0a0a0 #fff; background: #f0f0f0; text-align: center; }
.nav-tools { height: 28px; padding: 6px 6px; background: linear-gradient(#fafafa, #ededed); }
.nav-tools svg { display: block; width: 42px; height: 16px; }
.tree-box { flex: 1; min-height: 0; display: flex; flex-direction: column; border: 1px solid #828790; margin: 0 1px 3px 2px; background: #fff; }
.tree-row { flex: 1; min-height: 0; display: flex; }
.tree { flex: 1; min-width: 0; overflow: hidden; }
.tree li { position: relative; display: flex; align-items: center; height: 16px; white-space: nowrap; }
.tree svg { width: 16px; height: 16px; margin-right: 5px; }
.tree .m { line-height: 12px; }
.leaf { padding-left: 42px; }
.leaf::before, .node::before { content: ""; position: absolute; left: 12px; top: 0; bottom: 0; border-left: 1px dotted #888; }
.leaf::after { content: ""; position: absolute; left: 31px; top: 0; width: 10px; height: 8px; border-left: 1px dotted #888; border-bottom: 1px dotted #888; }
.leaf:not(.end)::after { height: 16px; border-bottom: 0; background: repeating-linear-gradient(90deg, #888 0 1px, transparent 1px 2px) 0 8px / 10px 1px no-repeat; }
.tail::before, .last::before { display: none; }
.node { padding-left: 23px; }
.node i { position: absolute; left: 9px; top: 3px; width: 7px; height: 7px; border: solid #444; border-width: 0 2px 2px 0; transform: rotate(45deg); background: #fff; }
.node.shut i { left: 7px; top: 5px; width: 7px; height: 7px; border-color: #999; transform: rotate(-45deg); }
.current { background: linear-gradient(#d9d9d9, #d9d9d9) 40px 0 no-repeat; }
.tree .cols { width: 13px; margin: 0; }
.vscroll { width: 16px; display: flex; flex-direction: column; background: #f0f0f0; }
.vscroll svg, .hscroll svg { width: 16px; height: 16px; fill: none; stroke: #505050; stroke-width: 2; }
.track { flex: 1; display: flex; flex-direction: column; }
.thumb { display: block; background: #cdcdcd; }
.nav-thumb { margin-top: auto; height: 50%; width: 15px; }
.view-thumb { height: 74%; }
.hscroll { display: flex; height: 16px; background: #f0f0f0; padding-right: 17px; }
.hscroll .thumb { flex: 1; margin: 0 5px 0 2px; }

/* component list */
.parts { width: 186px; display: flex; flex-direction: column; padding: 0 3px 2px; }
.parts-tools { display: flex; align-items: center; gap: 6px; height: 30px; padding: 0 4px; overflow: hidden; background: linear-gradient(#fafafa, #ececec); }
.search { height: 24px; margin: 3px 0 1px; border: 1px solid #828790; padding: 0 2px; background: #fff; }
.search::placeholder { color: #777; opacity: 1; }
.list { flex: 1; min-height: 0; overflow: hidden; padding-top: 1px; border: 1px solid #828790; border-bottom-width: 2px; background: #fff; }
.list li { position: relative; display: flex; align-items: center; height: 16px; padding-left: 44px; font: 10px/16px "DejaVu Sans Mono", monospace; }
.list li::before { content: ""; position: absolute; left: 31px; top: 0; bottom: 0; width: 12px; border-left: 1px dotted #888; background: repeating-linear-gradient(90deg, #888 0 1px, transparent 1px 2px) 0 8px / 12px 1px no-repeat; }
.list .end::before { bottom: 7px; }
.list svg { width: 11px; height: 11px; margin-right: 8px; }
.sel { display: flex; align-items: center; background: #316ac5; padding: 0 4px; margin-left: -4px; }

/* drawing workspace */
.work { flex: 1; min-width: 0; padding: 14px 5px 5px 0; }
.work-doc { height: 100%; display: flex; border: solid #a0a0a0; border-width: 0 1px 1px 0; padding-right: 2px; background: #fff; }
.mdi { flex: 1; display: flex; flex-direction: column; background: #d9e4f1; border: solid #505058; border-width: 0 1px 1px 0; padding: 0 7px 7px 0; }
.view { flex: 1; padding: 0 3px 28px 0; margin: 0 0 3px; background: #f0f0f0; border: solid #d0d0d0; border-width: 0 1px 1px 0; outline: 1px solid #fff; }
.view-canvas { height: 100%; background: #151820; border: solid red; border-width: 0 2px 2px 0; }
.mdi-status { height: 21px; border: 1px solid #ccc; background: linear-gradient(#f2f2f2, #fff); position: relative; }
.grip { position: absolute; right: 2px; bottom: 2px; width: 10px; height: 10px; background: radial-gradient(#bbb 1px, transparent 1px) 0 0 / 4px 4px; clip-path: polygon(100% 0, 100% 100%, 0 100%); }
.work .vscroll { width: 15px; }

.status { display: flex; gap: 2px; height: 21px; padding-top: 1px; background: #f0f0f0; }
.status > span { padding: 1px; border: 1px solid #ccc; background: linear-gradient(#f4f4f4, #fff); white-space: nowrap; }
.s-a { width: 148px; } .s-b { width: 78px; } .s-c { width: 98px; } .s-d { width: 48px; } .s-e { flex: 1; } .s-f { width: 70px; }

/* taskbar */
.taskbar { display: flex; height: 40px; background: #000c0e; color: #fff; }
.start { width: 48px; background: #000; }
.start svg { display: block; width: 16px; height: 16px; margin: auto; }
.cortana { display: flex; align-items: center; width: 344px; padding: 0 14px 0 8px; gap: 5px; background: #333; }
.ring { width: 22px; height: 22px; }
.cortana input { flex: 1; min-width: 0; border: 0; padding: 0; background: none; font-size: 14px; line-height: 20px; }
.cortana input::placeholder { color: #9a9a9a; opacity: 1; }
.mic { width: 12px; height: 18px; }
.apps { display: flex; }
.apps button { width: 47px; padding: 0 1px; }
.apps button:nth-child(-n+6) { width: 49px; }
.apps .wide:nth-child(4) { width: 52px; }
.apps svg { display: block; width: 24px; height: 24px; margin: auto; }
.apps .run { background: linear-gradient(#76b9ed, #76b9ed) 50% 100% / 38px 2px no-repeat; }
.apps .active { background: linear-gradient(#76b9ed, #76b9ed) 0 100% / 100% 2px no-repeat, #3a4144; }
.tray { display: flex; align-items: center; gap: 8px; margin-left: auto; padding-right: 13px; }
.tray svg { width: 16px; height: 16px; }
.cpu, .clock { text-align: center; line-height: 18px; }
.cpu { margin-right: 9px; }
.clock { margin-right: 10px; margin-left: 6px; }
.tray .kbd { width: 24px; }
.lang { font-size: 14px; padding: 0 4px 0 2px; }
.tray .note { width: 26px; height: 26px; margin-top: 6px; }
.badge { fill: #fff; font-size: 13px; font-weight: 700; }

/* polygon editor window */
.editor { position: absolute; left: 308px; top: 59px; width: 751px; height: 644px; display: flex; flex-direction: column; background: #f0f0f0; box-shadow: 0 2px 14px rgba(0,0,0,.45); }
.editor header { display: flex; justify-content: space-between; align-items: center; height: 29px; padding: 0 1px 0 8px; background: #fff; color: #999; }
.editor header button { width: 19px; height: 19px; background: #d4d4d4; color: #fff; margin-top: 4px; line-height: 16px; font-size: 10px; font-weight: 700; }
.ed-tools, .ed-opts { display: flex; align-items: center; height: 28px; padding-left: 5px; background: linear-gradient(#fff, #ededed); }
.ed-tools { gap: 7px; border-top: 1px solid #e6e6e6; height: 29px; }
.ed-tools .i14 { margin-right: 1px; }
.ed-tools .sep { margin-right: -1px; }
.off { color: #8a8a8a; }
.dots { width: 3px; height: 16px; background: repeating-linear-gradient(#aaa 0 2px, transparent 2px 4px); }
.ed-tools .dots { margin-right: -5px; }
.ed-opts { gap: 10px; background: linear-gradient(#fafafa, #eee); }
.ed-opts label { display: flex; align-items: center; gap: 9px; }
.ed-opts .dots { margin-right: -9px; }
.ed-opts input[type="radio"] { appearance: none; width: 11px; height: 11px; border: 1px solid #777; border-radius: 50%; background: #fff; }
.ed-opts input[type="radio"]:checked { background: radial-gradient(#000 0 2px, #fff 3px); }
.ed-opts .num { gap: 6px; margin-left: 4px; }
.ed-opts .sep + .num { margin-left: -8px; }
.spin { display: flex; width: 78px; height: 23px; margin-left: 3px; border: 1px solid #777; background: #f4f4f4; }
.spin input { flex: 1; min-width: 0; border: 0; background: none; text-align: right; color: #777; padding: 0 4px 2px 0; }
.ud { display: flex; flex-direction: column; justify-content: space-between; padding: 4px; width: 14px; }
.ud i { border: 3px solid transparent; border-top: 0; border-bottom: 3px solid #666; }
.ud i + i { border-top: 3px solid #666; border-bottom: 0; }
.cad { flex: 1; min-height: 0; background: #000; overflow: hidden; }
.cad svg { display: block; width: 100%; }
.dim { fill: #00f000; font: 700 17px "Noto Sans", sans-serif; text-anchor: middle; }
.sub { fill: #b4b4b4; font: 12px "DejaVu Sans Mono", monospace; text-anchor: middle; }
.ed-dyn { height: 28px; padding: 2px; border-bottom: 1px solid #999; }
.ed-dyn button { display: block; width: 58px; height: 23px; border: 1px solid #0078d7; background: #e0eef9; }
.ed-actions { display: flex; justify-content: flex-end; padding: 9px 13px; }
.btn { height: 23px; padding: 0 6px; border: 1px solid #adadad; background: #e1e1e1; }
.btn .m { line-height: 12px; }
.ok { width: 72px; margin-left: 15px; }
.mid { margin: 0 10px 0 23px; padding: 0 5px; }
.ed-status { display: flex; gap: 2px; height: 21px; }
.ed-status > span { position: relative; width: 148px; padding: 1px; border: 1px solid #ccc; background: linear-gradient(#f4f4f4, #fff); white-space: nowrap; }
.ed-status > span:last-child { flex: 1; }

/* grid definition dialog */
.dialog { position: absolute; left: 999px; top: 97px; width: 410px; border: 1px solid #3c8ee0; background: #f0f0f0; box-shadow: 0 4px 16px rgba(0,0,0,.4); }
.dialog header { height: 25px; padding: 4px 3px; background: #fff; }
.dlg-body { padding: 14px 13px 8px; }
fieldset { min-width: 0; margin: 0 0 6px; padding: 2px 7px 7px; border: 1px solid #dcdcdc; }
legend { padding: 0; height: 16px; white-space: nowrap; }
.area { display: block; width: 100%; height: 41px; border: 1px solid #7a7a7a; background: #fff; padding: 1px 2px; resize: none; margin: 0; overflow: hidden; font: 10px/14px "DejaVu Sans Mono", monospace; outline: 0; }
mark { display: inline-block; background: #0078d7; color: #fff; border-right: 1px solid #f08030; line-height: 12px; }
.dlg-actions { display: flex; justify-content: flex-end; padding: 5px 0 0; }

/* input method bar and desktop overlays */
.ime { position: absolute; left: 645px; top: 77px; width: 184px; height: 23px; display: flex; align-items: center; justify-content: space-between; padding: 0 4px 0 32px; color: #1f78c8; border: 1px solid #a9c4d8; border-left: 0; background: linear-gradient(90deg, transparent 20px, #fff 20px); }
.ime .logo { position: absolute; left: -2px; top: -6px; width: 30px; height: 30px; }
.ime svg { width: 16px; height: 16px; }
.ime b { font-size: 15px; }
.ball { position: absolute; left: 982px; top: -31px; width: 52px; height: 52px; filter: drop-shadow(0 2px 3px rgba(0,0,0,.4)); }
.ball text { fill: #fff; font: 700 13px "Open Sans", sans-serif; }
.marks { position: absolute; left: 0; top: 0; width: 100%; height: 100%; pointer-events: none; fill: none; stroke: red; stroke-width: 7; }
```
